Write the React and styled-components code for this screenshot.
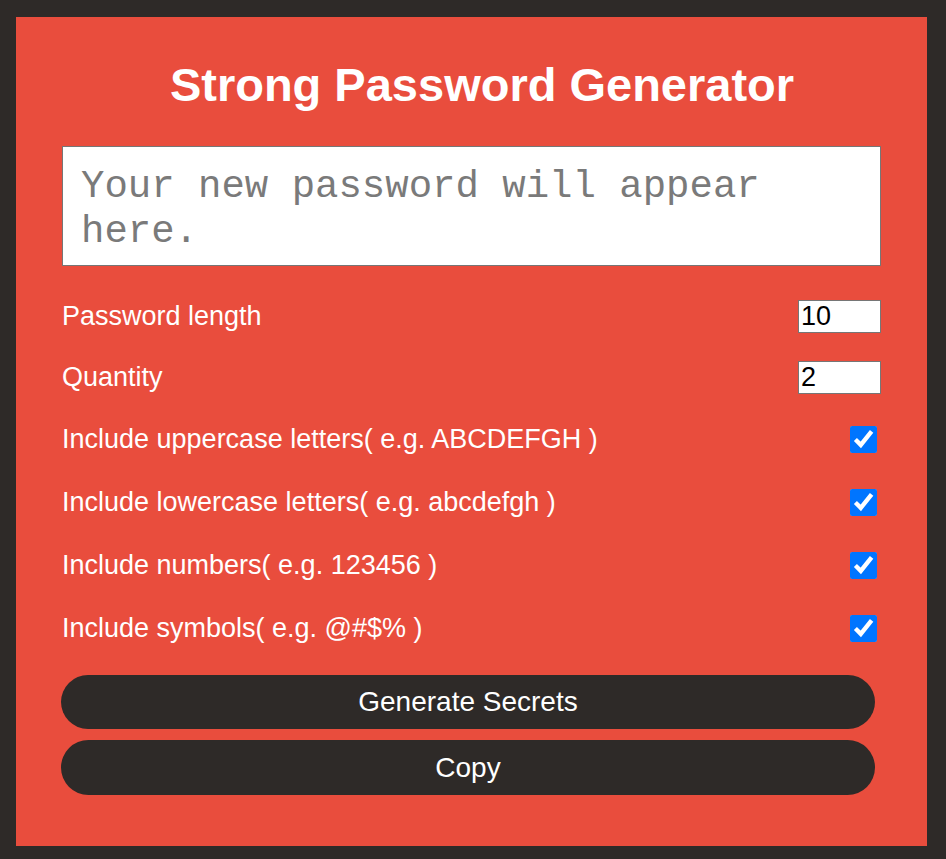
import React from "react";
import styled, { createGlobalStyle } from "styled-components";

const Global = createGlobalStyle`
  html, body {
    margin: 0;
    background: #2e2a28;
  }
  * { box-sizing: border-box; }
`;

const Page = styled.div`
  padding: 17px 0 13px 16px;
  font-family: "Liberation Sans", Arial, sans-serif;
`;

const Panel = styled.main`
  width: 911px;
  background: #e94d3d;
  padding: 41px 46px 51px;
  display: flex;
  flex-direction: column;
`;

const Title = styled.h1`
  margin: 0 0 34px;
  padding-left: 21px;
  font-size: 47px;
  line-height: 54px;
  font-weight: 700;
  color: #ffffff;
  text-align: center;
`;

const Output = styled.div`
  height: 120px;
  background: #ffffff;
  border: 1px solid #767676;
  padding: 18px 18px 10px;
  font-family: "Courier New", "Nimbus Mono PS", "FreeMono", "Liberation Mono", monospace;
  font-size: 39px;
  line-height: 45px;
  color: #7a7a7a;
  margin-bottom: 20px;
`;

const Options = styled.div`
  display: flex;
  flex-direction: column;
  margin-bottom: 15px;
`;

const Row = styled.div`
  height: ${(p) => p.$h}px;
  display: flex;
  align-items: center;
  justify-content: space-between;
`;

const Label = styled.label`
  font-size: 27px;
  line-height: 31px;
  color: #ffffff;
`;

const NumberInput = styled.input`
  width: 83px;
  height: 33px;
  margin: 0;
  padding: 0 2px;
  border: 1px solid #767676;
  background: #ffffff;
  font-family: "Liberation Sans", Arial, sans-serif;
  font-size: 27px;
  color: #000000;
  outline: none;
`;

const Check = styled.input`
  width: 27px;
  height: 27px;
  margin: 0 4px 0 0;
  accent-color: #0075ff;
`;

const Button = styled.button`
  width: 814px;
  height: ${(p) => p.$h}px;
  margin: 0 0 ${(p) => p.$mb}px -1px;
  border: none;
  border-radius: 999px;
  background: #2e2a28;
  color: #ffffff;
  font-family: "Liberation Sans", Arial, sans-serif;
  font-size: 28px;
  cursor: pointer;
`;

const checks = [
  "Include uppercase letters( e.g. ABCDEFGH )",
  "Include lowercase letters( e.g. abcdefgh )",
  "Include numbers( e.g. 123456 )",
  "Include symbols( e.g. @#$% )",
];

export default function App() {
  return (
    <>
      <Global />
      <Page>
        <Panel>
          <Title>Strong Password Generator</Title>
          <Output>Your new password will appear here.</Output>
          <Options>
            <Row $h={61}>
              <Label>Password length</Label>
              <NumberInput type="number" defaultValue={10} />
            </Row>
            <Row $h={61}>
              <Label>Quantity</Label>
              <NumberInput type="number" defaultValue={2} />
            </Row>
            {checks.map((c) => (
              <Row $h={63} key={c}>
                <Label>{c}</Label>
                <Check type="checkbox" defaultChecked />
              </Row>
            ))}
          </Options>
          <Button $h={54} $mb={11}>Generate Secrets</Button>
          <Button $h={55} $mb={0}>Copy</Button>
        </Panel>
      </Page>
    </>
  );
}
